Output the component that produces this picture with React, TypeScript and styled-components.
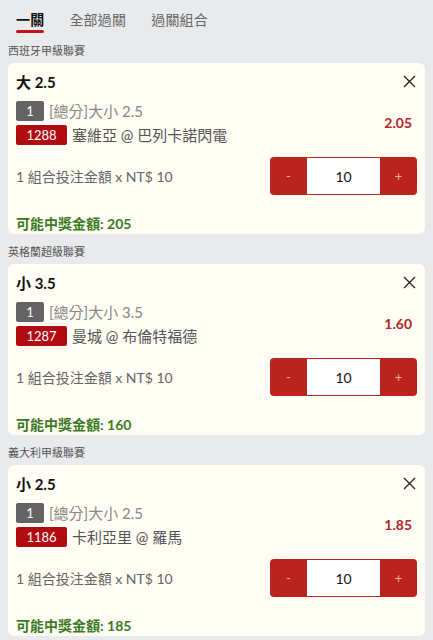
import styled, { createGlobalStyle } from "styled-components"

const GlobalStyle = createGlobalStyle`
  body {
    margin: 0;
    background: #e9eaec;
    font-family: Lato, "Noto Sans CJK TC", sans-serif;
  }
`

const Page = styled.div`
  width: 433px;
  min-height: 640px;
  background: #e9eaec;
`

const Tabs = styled.div`
  display: flex;
  gap: 25px;
  height: 33px;
  padding: 0 16px;
  box-sizing: border-box;
`

const Tab = styled.div<{ $active?: boolean }>`
  position: relative;
  display: flex;
  align-items: center;
  height: 33px;
  padding-top: 4px;
  box-sizing: border-box;
  font-size: 14px;
  font-weight: ${({ $active }) => ($active ? 700 : 400)};
  color: ${({ $active }) => ($active ? "#111" : "#666")};
  letter-spacing: 0.2px;

  &::after {
    content: "";
    display: ${({ $active }) => ($active ? "block" : "none")};
    position: absolute;
    left: 0;
    right: 0;
    bottom: 0;
    height: 3px;
    border-radius: 2px;
    background: #c0151b;
  }
`

const League = styled.div`
  height: 30px;
  display: flex;
  align-items: flex-end;
  padding: 0 8px 5px;
  box-sizing: border-box;
  font-size: 11px;
  line-height: 14px;
  color: #555;
`

const Card = styled.div`
  margin: 0 8px;
  height: 171px;
  box-sizing: border-box;
  background: #fffdf4;
  border-radius: 6px;
  padding: 8px 8px 0;
  display: flex;
  flex-direction: column;
`

const TitleRow = styled.div`
  display: flex;
  align-items: center;
  justify-content: space-between;
  height: 20px;
  padding-right: 1px;
`

const Title = styled.div`
  font-size: 15px;
  font-weight: 700;
  color: #111;
`

const Close = styled.svg`
  width: 13px;
  height: 13px;
`

const InfoRow = styled.div`
  display: flex;
  align-items: center;
  justify-content: space-between;
  margin-top: 9px;
  padding-right: 5px;
`

const Lines = styled.div`
  display: flex;
  flex-direction: column;
  gap: 3px;
`

const Line = styled.div<{ $muted?: boolean }>`
  display: flex;
  align-items: center;
  gap: 5px;
  font-size: 15px;
  color: ${({ $muted }) => ($muted ? "#888" : "#555")};
  height: 21px;
`

const Badge = styled.span<{ $tone: "gray" | "red" }>`
  display: inline-flex;
  align-items: center;
  justify-content: center;
  height: 20px;
  min-width: ${({ $tone }) => ($tone === "red" ? "51px" : "28px")};
  border-radius: 2px;
  background: ${({ $tone }) => ($tone === "red" ? "#b20b0f" : "#636363")};
  color: #fff;
  font-size: 13px;
`

const Odds = styled.div`
  font-size: 14px;
  font-weight: 700;
  color: #b5252a;
`

const StakeRow = styled.div`
  display: flex;
  align-items: center;
  justify-content: space-between;
  margin-top: 12px;
`

const StakeText = styled.div`
  font-size: 14px;
  color: #666;
`

const Stepper = styled.div`
  display: flex;
  width: 147px;
  height: 38px;
  border-radius: 4px;
  overflow: hidden;
  background: #bb231f;
`

const StepButton = styled.div`
  width: 37px;
  display: flex;
  align-items: center;
  justify-content: center;
  color: #f2b0a8;
  font-size: 13px;
`

const StepValue = styled.div`
  flex: 1;
  margin: 1px 0;
  background: #fff;
  display: flex;
  align-items: center;
  justify-content: center;
  font-size: 14px;
  color: #111;
`

const Payout = styled.div`
  margin-top: 18px;
  font-size: 14px;
  font-weight: 700;
  color: #3b7a1f;
`

const bets = [
  { league: "西班牙甲級聯賽", title: "大 2.5", market: "[總分]大小 2.5", code: "1288", match: "塞維亞 @ 巴列卡諾閃電", odds: "2.05", payout: 205 },
  { league: "英格蘭超級聯賽", title: "小 3.5", market: "[總分]大小 3.5", code: "1287", match: "曼城 @ 布倫特福德", odds: "1.60", payout: 160 },
  { league: "義大利甲級聯賽", title: "小 2.5", market: "[總分]大小 2.5", code: "1186", match: "卡利亞里 @ 羅馬", odds: "1.85", payout: 185 },
]

export default function App() {
  return (
    <Page>
      <GlobalStyle />
      <Tabs>
        <Tab $active>一關</Tab>
        <Tab>全部過關</Tab>
        <Tab>過關組合</Tab>
      </Tabs>
      {bets.map((bet) => (
        <div key={bet.code}>
          <League>{bet.league}</League>
          <Card>
            <TitleRow>
              <Title>{bet.title}</Title>
              <Close viewBox="0 0 13 13">
                <path d="M1 1 L12 12 M12 1 L1 12" stroke="#222" strokeWidth="1.3" fill="none" />
              </Close>
            </TitleRow>
            <InfoRow>
              <Lines>
                <Line $muted>
                  <Badge $tone="gray">1</Badge>
                  {bet.market}
                </Line>
                <Line>
                  <Badge $tone="red">{bet.code}</Badge>
                  {bet.match}
                </Line>
              </Lines>
              <Odds>{bet.odds}</Odds>
            </InfoRow>
            <StakeRow>
              <StakeText>1 組合投注金額 x NT$ 10</StakeText>
              <Stepper>
                <StepButton>-</StepButton>
                <StepValue>10</StepValue>
                <StepButton>+</StepButton>
              </Stepper>
            </StakeRow>
            <Payout>可能中獎金額: {bet.payout}</Payout>
          </Card>
        </div>
      ))}
    </Page>
  )
}
